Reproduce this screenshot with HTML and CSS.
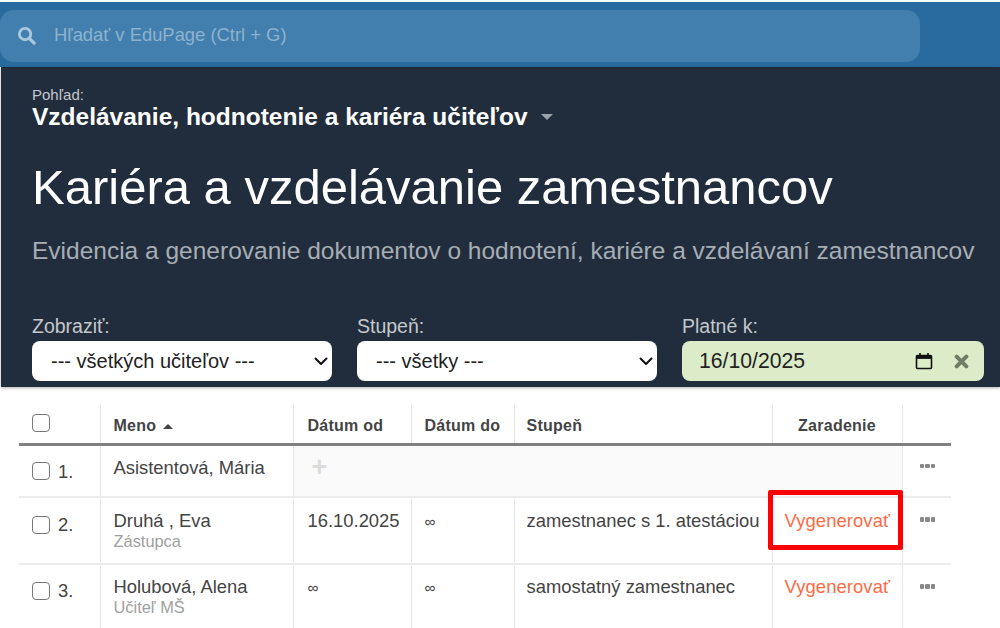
FILE: index.html
```html
<!DOCTYPE html>
<html lang="sk">
<head>
<meta charset="utf-8">
<title>Kariéra a vzdelávanie zamestnancov</title>
<link rel="stylesheet" href="styles.css">
</head>
<body>
<div class="topbar">
  <div class="search">
    <svg class="search-icon" viewBox="0 0 20 20" aria-hidden="true"><circle cx="8.5" cy="8.5" r="6" fill="none" stroke="currentColor" stroke-width="3"/><path d="M13 13l5 5" stroke="currentColor" stroke-width="3.4" stroke-linecap="round"/></svg>
    <span>Hľadať v EduPage (Ctrl + G)</span>
  </div>
</div>
<header class="hero">
  <div class="view-label">Pohľad:</div>
  <div class="view-name">Vzdelávanie, hodnotenie a kariéra učiteľov <span class="caret"></span></div>
  <h1>Kariéra a vzdelávanie zamestnancov</h1>
  <p class="subtitle">Evidencia a generovanie dokumentov o hodnotení, kariére a vzdelávaní zamestnancov</p>
  <div class="filters">
    <label class="filter">
      <span>Zobraziť:</span>
      <select class="control"><option>--- všetkých učiteľov ---</option></select>
    </label>
    <label class="filter">
      <span>Stupeň:</span>
      <select class="control"><option>--- všetky ---</option></select>
    </label>
    <div class="filter filter-date">
      <span>Platné k:</span>
      <div class="control date">
        <span class="date-value">16/10/2025</span>
        <svg class="cal" viewBox="0 0 18 18" aria-hidden="true"><path d="M2.5 3.5h13a1 1 0 0 1 1 1v11a1 1 0 0 1-1 1h-13a1 1 0 0 1-1-1v-11a1 1 0 0 1 1-1z" fill="none" stroke="#111" stroke-width="1.6"/><path d="M1.5 3.5h15v3.4h-15z" fill="#111"/><path d="M5 1v3M13 1v3" stroke="#111" stroke-width="1.6"/></svg>
        <svg class="clear" viewBox="0 0 14 14" aria-hidden="true"><path d="M2.5 2.5l9 9M11.5 2.5l-9 9" stroke="#6e7d66" stroke-width="3.8" stroke-linecap="round"/></svg>
      </div>
    </div>
  </div>
</header>
<main class="content">
  <table class="grid">
    <colgroup>
      <col class="c-check"><col class="c-name"><col class="c-from"><col class="c-to"><col class="c-grade"><col class="c-action"><col class="c-more">
    </colgroup>
    <thead>
      <tr>
        <th class="cell-check"><span class="box"></span></th>
        <th>Meno <span class="sort"></span></th>
        <th class="col-from">Dátum od</th>
        <th>Dátum do</th>
        <th class="col-grade">Stupeň</th>
        <th class="center">Zaradenie</th>
        <th></th>
      </tr>
    </thead>
    <tbody>
      <tr class="row-1">
        <td class="cell-check"><span class="box"></span><span class="num">1.</span></td>
        <td>Asistentová, Mária</td>
        <td class="empty" colspan="4"><span class="plus">+</span></td>
        <td class="more"><span class="dots"><i></i><i></i><i></i></span></td>
      </tr>
      <tr class="row-2">
        <td class="cell-check"><span class="box"></span><span class="num">2.</span></td>
        <td>Druhá , Eva<small>Zástupca</small></td>
        <td class="col-from">16.10.2025</td>
        <td><span class="inf">∞</span></td>
        <td class="col-grade">zamestnanec s 1. atestáciou</td>
        <td class="action"><a>Vygenerovať</a><span class="highlight"></span></td>
        <td class="more"><span class="dots"><i></i><i></i><i></i></span></td>
      </tr>
      <tr class="row-3">
        <td class="cell-check"><span class="box"></span><span class="num">3.</span></td>
        <td>Holubová, Alena<small>Učiteľ MŠ</small></td>
        <td class="col-from"><span class="inf">∞</span></td>
        <td><span class="inf">∞</span></td>
        <td class="col-grade">samostatný zamestnanec</td>
        <td class="action"><a>Vygenerovať</a></td>
        <td class="more"><span class="dots"><i></i><i></i><i></i></span></td>
      </tr>
    </tbody>
  </table>
</main>
</body>
</html>
```
FILE: styles.css
```css
* { box-sizing: border-box; }
html, body { margin: 0; height: 628px; overflow: hidden; background: #fff; }
body { font-family: "Liberation Sans", Arial, sans-serif; color: #444; padding-top: 2px; }

.topbar { height: 65px; background: #2a6b9f; padding: 8px 80px 6px 0; }
.search {
  width: 920px; height: 52px; border-radius: 14px; background: #427fae;
  display: flex; align-items: center; padding: 0 0 2px 17px; gap: 18px;
  color: #8db2cf; font-size: 18.4px;
}
.search-icon { width: 19px; height: 19px; color: #aac8dc; }

.hero { height: 320px; margin-left: 1px; background: #212d3d; padding: 20px 0 0 31px; color: #fff; box-shadow: 0 1px 3px rgba(0,0,0,.3); }
.view-label { font-size: 15px; line-height: 15px; color: #c4c8cc; }
.view-name { font-size: 24.5px; line-height: 29px; font-weight: 700; display: flex; align-items: center; gap: 13px; white-space: nowrap; }
.caret { width: 0; height: 0; border: 6px solid transparent; border-top: 6px solid #9aa3ad; border-bottom: 0; margin-top: 1px; }
h1 { margin: 27px 0 0; font-size: 49px; line-height: 58px; font-weight: 400; white-space: nowrap; }
.subtitle { margin: 20px 0 0; font-size: 24.5px; line-height: 30px; color: #a7adb4; white-space: nowrap; }

.filters { display: flex; gap: 25px; margin-top: 47px; }
.filter { display: flex; flex-direction: column; width: 300px; font-size: 19.5px; line-height: 27px; color: #c4c8cc; }
.filter-date { width: 302px; }
.control { height: 40px; border: 0; border-radius: 8px; background: #fff; font: 20px "Liberation Sans", Arial, sans-serif; color: #222; padding: 0 12px 0 15px; margin: 1px 0 0; }
select.control {
  outline: none; appearance: none;
  padding-left: 19px;
  background: #fff url("data:image/svg+xml,%3Csvg xmlns='http://www.w3.org/2000/svg' width='14' height='9' viewBox='0 0 14 9'%3E%3Cpath d='M1.5 1.5L7 7l5.5-5.5' fill='none' stroke='%23111' stroke-width='2' stroke-linecap='round' stroke-linejoin='round'/%3E%3C/svg%3E") no-repeat right 4px center;
}
.date { background: #dcecc8; display: flex; align-items: center; padding: 0 15px 0 17px; color: #222; font-size: 21.2px; }
.date-value { flex: 1; }
.cal { width: 18px; height: 18px; margin-right: 21px; }
.clear { width: 15px; height: 15px; }

.content { padding: 18px 0 0 19px; }
.grid { table-layout: fixed; width: 932px; border-collapse: collapse; font-size: 18.4px; }
.c-check { width: 81px; }
.c-name { width: 193px; }
.c-from { width: 118px; }
.c-to { width: 103px; }
.c-grade { width: 258px; }
.c-action { width: 130px; }
.c-more { width: 49px; }

th, td { border-left: 1px solid #e6e6e6; text-align: left; vertical-align: top; padding: 0 0 0 13px; }
th:first-child, td:first-child { border-left: 0; padding-left: 13px; }
thead tr { height: 39px; border-bottom: 3px solid #808080; }
th { font-size: 16px; font-weight: 700; color: #444; padding-top: 12px; letter-spacing: .25px; white-space: nowrap; line-height: 18px; }
th.center { text-align: center; padding-left: 0; }
th.cell-check { padding-top: 8px; }
tbody tr { border-bottom: 2px solid #ececec; }
.row-1 { height: 53px; }
.row-2 { height: 67px; }
.row-3 { height: 67px; }
td { padding-top: 11px; line-height: 22px; white-space: nowrap; }
.row-2 td { padding-top: 12px; }
small { display: block; font-size: 16.4px; line-height: 20px; color: #a0a0a0; margin-top: -1px; }
th.col-from, td.col-from { padding-left: 14px; }
th.col-grade, td.col-grade { padding-left: 12px; }

.box { display: inline-block; width: 18px; height: 18px; border: 1.6px solid #777; border-radius: 4px; background: #fff; vertical-align: middle; }
td .box { margin-top: 5px; }
.num { margin-left: 8px; vertical-align: top; position: relative; top: 4px; }
.sort { display: inline-block; width: 0; height: 0; border: 5px solid transparent; border-bottom: 5px solid #444; border-top: 0; margin: 0 0 2px 2px; }

td.empty { background: #fafafa; padding-left: 18px; padding-top: 9px; }
.plus { font-size: 27px; font-weight: 700; color: #dcdcdc; line-height: 24px; }
.inf { font-size: 15.5px; }
.row-2 .action, .row-3 .action { padding-left: 12px; position: relative; }
.action a { color: #ff6a45; letter-spacing: .1px; }
.highlight { position: absolute; left: -5px; top: -8px; width: 135px; height: 60px; border: 5px solid #f00; border-radius: 2px; }
td.more { padding-left: 17px; padding-top: 9px; }
.row-2 td.more, .row-3 td.more { padding-top: 10px; }
.dots { display: inline-flex; gap: 1px; vertical-align: top; margin-top: 9px; }
.dots i { display: block; width: 4.5px; height: 4.5px; border-radius: 1px; background: #888; }
```
